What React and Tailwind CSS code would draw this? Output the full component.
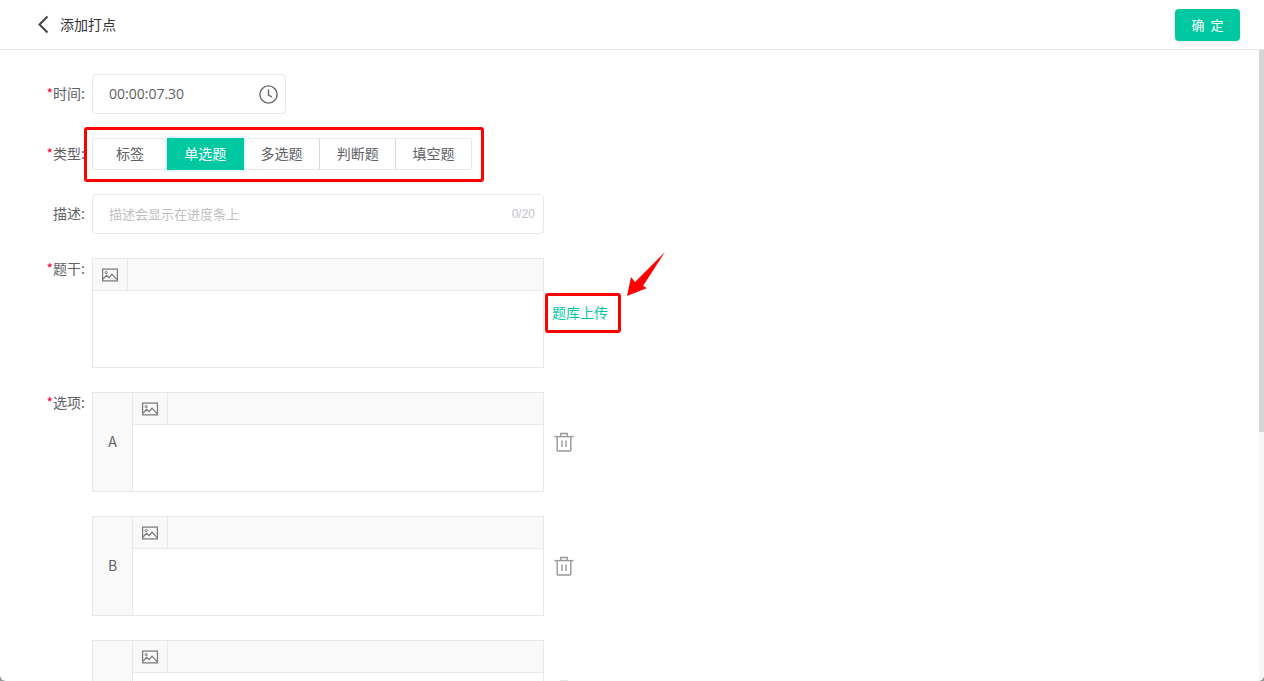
const FONT = "font-['Noto_Sans_CJK_SC','Liberation_Sans',sans-serif]";

function ImageIcon() {
  return (
    <svg width="16" height="14" viewBox="0 0 16 14" fill="none" stroke="#777" strokeWidth="1.2">
      <rect x="0.6" y="1.1" width="14.8" height="11.8" />
      <circle cx="4.2" cy="4.6" r="1.1" strokeWidth="1" />
      <path d="M1 11l3.6-3.6L7 9.6l3-3.4 5 5.4" />
    </svg>
  );
}

function TrashIcon() {
  return (
    <svg width="20" height="20" viewBox="0 0 20 20" fill="none" stroke="#999" strokeWidth="1.4">
      <path d="M0.500 4.600h19" />
      <path d="M6.800 4.400V1.500h6.400v2.900" />
      <path d="M3.200 4.600V18a1 1 0 0 0 1 1h11.600a1 1 0 0 0 1-1V4.600" />
      <path d="M8 8.500v6.500M12 8.500v6.500" />
    </svg>
  );
}

function Editor() {
  return (
    <div className="flex flex-col flex-1 h-full">
      <div className="flex h-[32px] bg-[#f9f9f9] border-b border-[#e8e8e8] shrink-0">
        <div className="w-[35px] flex items-center justify-center border-r border-[#e8e8e8]">
          <ImageIcon />
        </div>
      </div>
      <div className="flex-1 bg-white" />
    </div>
  );
}

function Row({ label, required, top = false, children, className = "" }) {
  return (
    <div className={`flex ${top ? "items-start" : "items-center"} ${className}`}>
      <div className="w-[85px] shrink-0 text-right text-[14px] leading-[20px] text-[#606266] pb-[2px]">
        {required && <span className="text-[#ff0033]">*</span>}
        {label}:
      </div>
      <div className="ml-[7px] relative flex-1">{children}</div>
    </div>
  );
}

function Option({ letter }) {
  return (
    <div className="flex items-center mb-[24px]">
      <div className="w-[452px] h-[100px] flex border border-[#e8e8e8] shrink-0">
        <div className="w-[40px] bg-[#f9f9f9] border-r border-[#e8e8e8] flex items-center justify-center text-[14px] text-[#606266] shrink-0 pb-[2px]">
          {letter}
        </div>
        <Editor />
      </div>
      <div className="ml-[10px] flex items-center justify-center">
        <TrashIcon />
      </div>
    </div>
  );
}

const tabs = ["标签", "单选题", "多选题", "判断题", "填空题"];

export default function App() {
  return (
    <div className="h-[681px] w-[1264px] bg-[#8f9a9c]">
      <div className={`${FONT} h-[681px] w-[1264px] overflow-hidden bg-white flex flex-col relative rounded-b-[6px]`}>
        <header className="h-[50px] shrink-0 border-b border-[#e5e5e5] flex items-center justify-between pl-[36px] pr-[24px]">
          <div className="flex items-center">
            <svg width="16" height="19" viewBox="0 0 16 19" fill="none" stroke="#444" strokeWidth="2">
              <path d="M11.500 1.500L3.500 9.500l8 8" />
            </svg>
            <span className="ml-[8px] text-[14px] text-[#333]">添加打点</span>
          </div>
          <button className="w-[65px] h-[32px] rounded-[4px] bg-[#00c9a1] text-white text-[13px] shadow-[0_2px_3px_rgba(0,0,0,0.06)]">
            确&nbsp;&nbsp;定
          </button>
        </header>

        <div className="flex-1 relative overflow-hidden flex">
          <main className="flex-1 pt-[24px]">
            <Row label="时间" required className="mb-[24px]">
              <div className="w-[194px] h-[40px] border border-[#e8e8e8] rounded-[4px] flex items-center justify-between pl-[16px] pr-[7px] text-[14px] text-[#606266]">
                <span className="font-['Open_Sans','Noto_Sans_CJK_SC',sans-serif] pb-[2px]">00:00:07.30</span>
                <svg width="19" height="19" viewBox="0 0 19 19" fill="none" stroke="#666" strokeWidth="1.400">
                  <circle cx="9.500" cy="9.500" r="8.600" />
                  <path d="M9.500 4.500v5.500l3.500 2" />
                </svg>
              </div>
            </Row>

            <Row label="类型" required className="mb-[24px]">
              <div className="flex h-[32px] w-[380px] border border-[#e8e8e8] rounded-[2px] text-[14px] text-[#606266]">
                {tabs.map((t, i) => (
                  <div
                    key={t}
                    className={
                      i === 1
                        ? "w-[77px] -my-px h-[32px] pb-[2px] flex items-center justify-center bg-[#00c9a1] text-white shadow-[0_0_0_2px_#e6f7ff]"
                        : i === 0
                          ? "w-[74px] pb-[2px] flex items-center justify-center"
                          : i === 2
                            ? "w-[76px] pb-[2px] flex items-center justify-center"
                            : "w-[76px] pb-[2px] flex items-center justify-center border-l border-[#d9d9d9]"
                    }
                  >
                    {t}
                  </div>
                ))}
              </div>
            </Row>

            <Row label="描述" className="mb-[24px]">
              <div className="w-[452px] h-[40px] border border-[#e8e8e8] rounded-[4px] flex items-center justify-between pl-[16px] pr-[8px]">
                <span className="text-[13px] text-[#bfbfbf]">描述会显示在进度条上</span>
                <span className="text-[12px] text-[#c0c4cc] font-['Liberation_Sans',sans-serif]">0/20</span>
              </div>
            </Row>

            <Row label="题干" required top className="mb-[24px]">
              <div className="flex items-center">
                <div className="w-[452px] h-[110px] flex border border-[#e8e8e8] shrink-0">
                  <Editor />
                </div>
                <span className="ml-[8px] text-[14px] text-[#00c9a1] pb-[2px]">题库上传</span>
              </div>
            </Row>

            <Row label="选项" required top>
              <Option letter="A" />
              <Option letter="B" />
              <Option letter="" />
            </Row>
          </main>

          <div className="w-[5px] shrink-0 bg-[#f7f7f7]">
            <div className="h-[382px] bg-[#d4d4d4]" />
          </div>
        </div>

        {/* annotations */}
        <div className="absolute left-[84px] top-[127px] w-[400px] h-[55px] border-[3px] border-[#ff0000] rounded-[3px]" />
        <div className="absolute left-[545px] top-[293px] w-[76px] h-[40px] border-[3px] border-[#ff0000] rounded-[3px]" />
        <svg className="absolute left-[625px] top-[250px]" width="42" height="48" viewBox="0 0 42 48" fill="#ff0000">
          <path d="M40 2 L18 36 L22 38 L2 46 L6 27 L10 32 Z" />
        </svg>
      </div>
    </div>
  );
}
